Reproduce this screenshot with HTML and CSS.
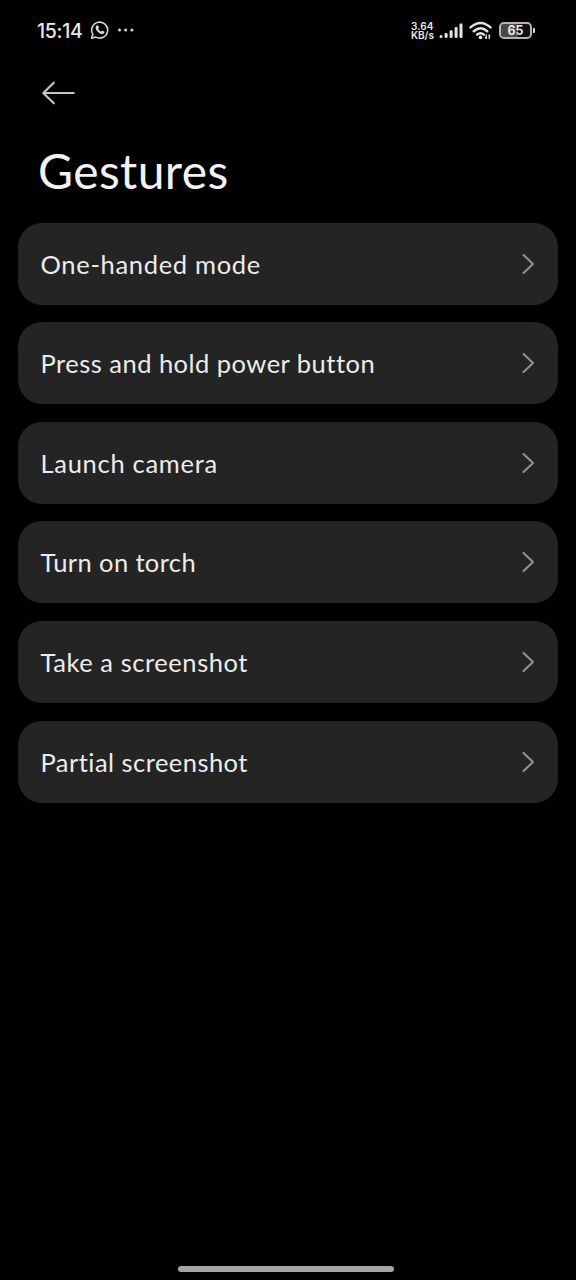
FILE: index.html
```html
<!DOCTYPE html>
<html lang="en">
<head>
<meta charset="utf-8">
<title>Gestures</title>
<link rel="stylesheet" href="styles.css">
</head>
<body>
<div class="screen">
  <header class="status">
    <span class="clock">15:14</span>
    <svg class="chat" width="20" height="20" viewBox="0 0 20 20" fill="none">
      <path d="M1.6 18.2 2.8 14.2A8 8 0 1 1 5.8 17.1Z" stroke="#d4d4d4" stroke-width="1.6" stroke-linejoin="round"/>
      <path d="M6.7 5.6c.7-.5 1.3-.3 1.6.5l.6 1.3c.2.6-.5 1-.7 1.5.7 1.3 1.6 2.1 2.9 2.7.5-.3.9-1.1 1.5-.9l1.6.8c.5.3.2 1.5-.4 2-1.2 1-3.3.4-5.2-1.1C6.500 10.700 5.300 8.700 5.800 6.900 6 6.300 6.300 5.900 6.700 5.600Z" fill="#dcdcdc"/>
    </svg>
    <svg class="more" width="18" height="4" viewBox="0 0 18 4" fill="#d8d8d8"><circle cx="2.500" cy="2" r="1.500"/><circle cx="8.700" cy="2" r="1.500"/><circle cx="14.900" cy="2" r="1.500"/></svg>
    <div class="speed"><span class="rate">3.64</span><span class="unit">KB/s</span></div>
    <svg class="signal" width="24" height="16" viewBox="0 0 24 16" stroke="#e6e6e6" stroke-width="3" stroke-linecap="round">
      <path d="M2 13.400v.2M7.100 11.200v2.400M12.100 8.600v5M17.100 5.200v8.400M22 1.800v11.800"/>
    </svg>
    <svg class="wifi" width="24" height="20" viewBox="0 0 24 20" fill="none">
      <path d="M1.500 6.400Q11.500-2.500 21.500 6.400M4.800 10.200Q11.500 4.400 18.200 10.200M8.200 13.600Q11.500 11 14.800 13.600" stroke="#e2e2e2" stroke-width="2.500" stroke-linecap="round"/>
      <circle cx="11.500" cy="16.400" r="1.800" fill="#e6e6e6"/>
      <path d="M17.300 13.400v4.600M20.200 13.400v4.600" stroke="#ddd" stroke-width="1.400"/>
      <path d="M15.500 16h1.800v2zM22 15.300h-1.800v-1.900z" fill="#ddd"/>
    </svg>
    <div class="battery"><span class="level">65</span></div>
    <span class="tip"></span>
  </header>
  <svg class="back" width="34" height="24" viewBox="0 0 34 24" fill="none" stroke="#c4c4c4" stroke-width="2.200" stroke-linecap="round" stroke-linejoin="round"><path d="M12.800 1.700 2.300 12 12.800 22.300M2.500 12H32.700"/></svg>
  <h1 class="title">Gestures</h1>
  <main class="list">
    <div class="card"><span class="label one">One-handed mode</span><svg class="chevron" viewBox="0 0 14 22"><path d="M2.500 2 12 11 2.500 20"/></svg></div>
    <div class="card"><span class="label press">Press and hold power button</span><svg class="chevron" viewBox="0 0 14 22"><path d="M2.500 2 12 11 2.500 20"/></svg></div>
    <div class="card"><span class="label launch">Launch camera</span><svg class="chevron" viewBox="0 0 14 22"><path d="M2.500 2 12 11 2.500 20"/></svg></div>
    <div class="card"><span class="label torch">Turn on torch</span><svg class="chevron" viewBox="0 0 14 22"><path d="M2.500 2 12 11 2.500 20"/></svg></div>
    <div class="card"><span class="label take">Take a screenshot</span><svg class="chevron" viewBox="0 0 14 22"><path d="M2.500 2 12 11 2.500 20"/></svg></div>
    <div class="card"><span class="label partial">Partial screenshot</span><svg class="chevron" viewBox="0 0 14 22"><path d="M2.500 2 12 11 2.500 20"/></svg></div>
  </main>
  <div class="home"></div>
</div>
</body>
</html>
```
FILE: styles.css
```css
* { box-sizing: border-box; }
body { margin: 0; background: #000; color: #ececec; font-family: Lato, "Liberation Sans", sans-serif; }
.screen { display: flex; flex-direction: column; width: 576px; height: 1280px; background: #000; overflow: hidden; }
.status { display: flex; align-items: center; height: 60px; padding-left: 37px; flex: none; }
.clock { width: 53px; padding-top: 1px; font: 500 19.5px/24px Inter, sans-serif; letter-spacing: -0.3px; color: #e8e8e8; }
.more { margin-left: 7px; }
.speed { display: flex; flex-direction: column; width: 26px; margin-left: 276px; font: 600 10px/10px Inter, sans-serif; color: #ececec; }
.rate { height: 9px; letter-spacing: 0.1px; }
.unit { height: 10px; }
.signal { margin: 2px 0 0 2px; }
.wifi { margin: 2px 0 0 6px; }
.battery { display: flex; align-items: center; justify-content: center; width: 33px; height: 17px; margin-left: 6px; border: 2px solid #b4b4b4; border-radius: 5px; background: linear-gradient(90deg, #484848 60%, #101010 60%) padding-box; }
.level { font: 600 12.5px/13px Inter, sans-serif; color: #f2f2f2; }
.tip { width: 2px; height: 5px; margin-left: 1px; border-radius: 0 1px 1px 0; background: #d0d0d0; }
.back { flex: none; margin: 21px 0 0 41px; }
.title { flex: none; margin: 36px 0 0 38px; height: 60px; font-size: 48px; line-height: 60px; font-weight: 400; letter-spacing: 0.4px; color: #f2f2f2; white-space: nowrap; }
.list { display: flex; flex-direction: column; gap: 17.6px; margin: 21.7px 18px 0 17.5px; }
.card { display: flex; align-items: center; justify-content: space-between; height: 82px; padding: 0 23px; border-radius: 24px; background: #242424; }
.label { font-size: 25.5px; line-height: 34px; color: #ececec; white-space: nowrap; }
.one { letter-spacing: 0.68px; }
.press { letter-spacing: 0.48px; }
.launch { letter-spacing: 0.7px; }
.torch { letter-spacing: 0.38px; }
.take { letter-spacing: 0.56px; }
.partial { letter-spacing: 0.46px; }
.chevron { width: 14px; height: 22px; fill: none; stroke: #929292; stroke-width: 2; stroke-linecap: round; stroke-linejoin: round; }
.home { flex: none; width: 216px; height: 6px; margin: auto 0 8px 178px; border-radius: 3px; background: #a4a4a4; }
```
